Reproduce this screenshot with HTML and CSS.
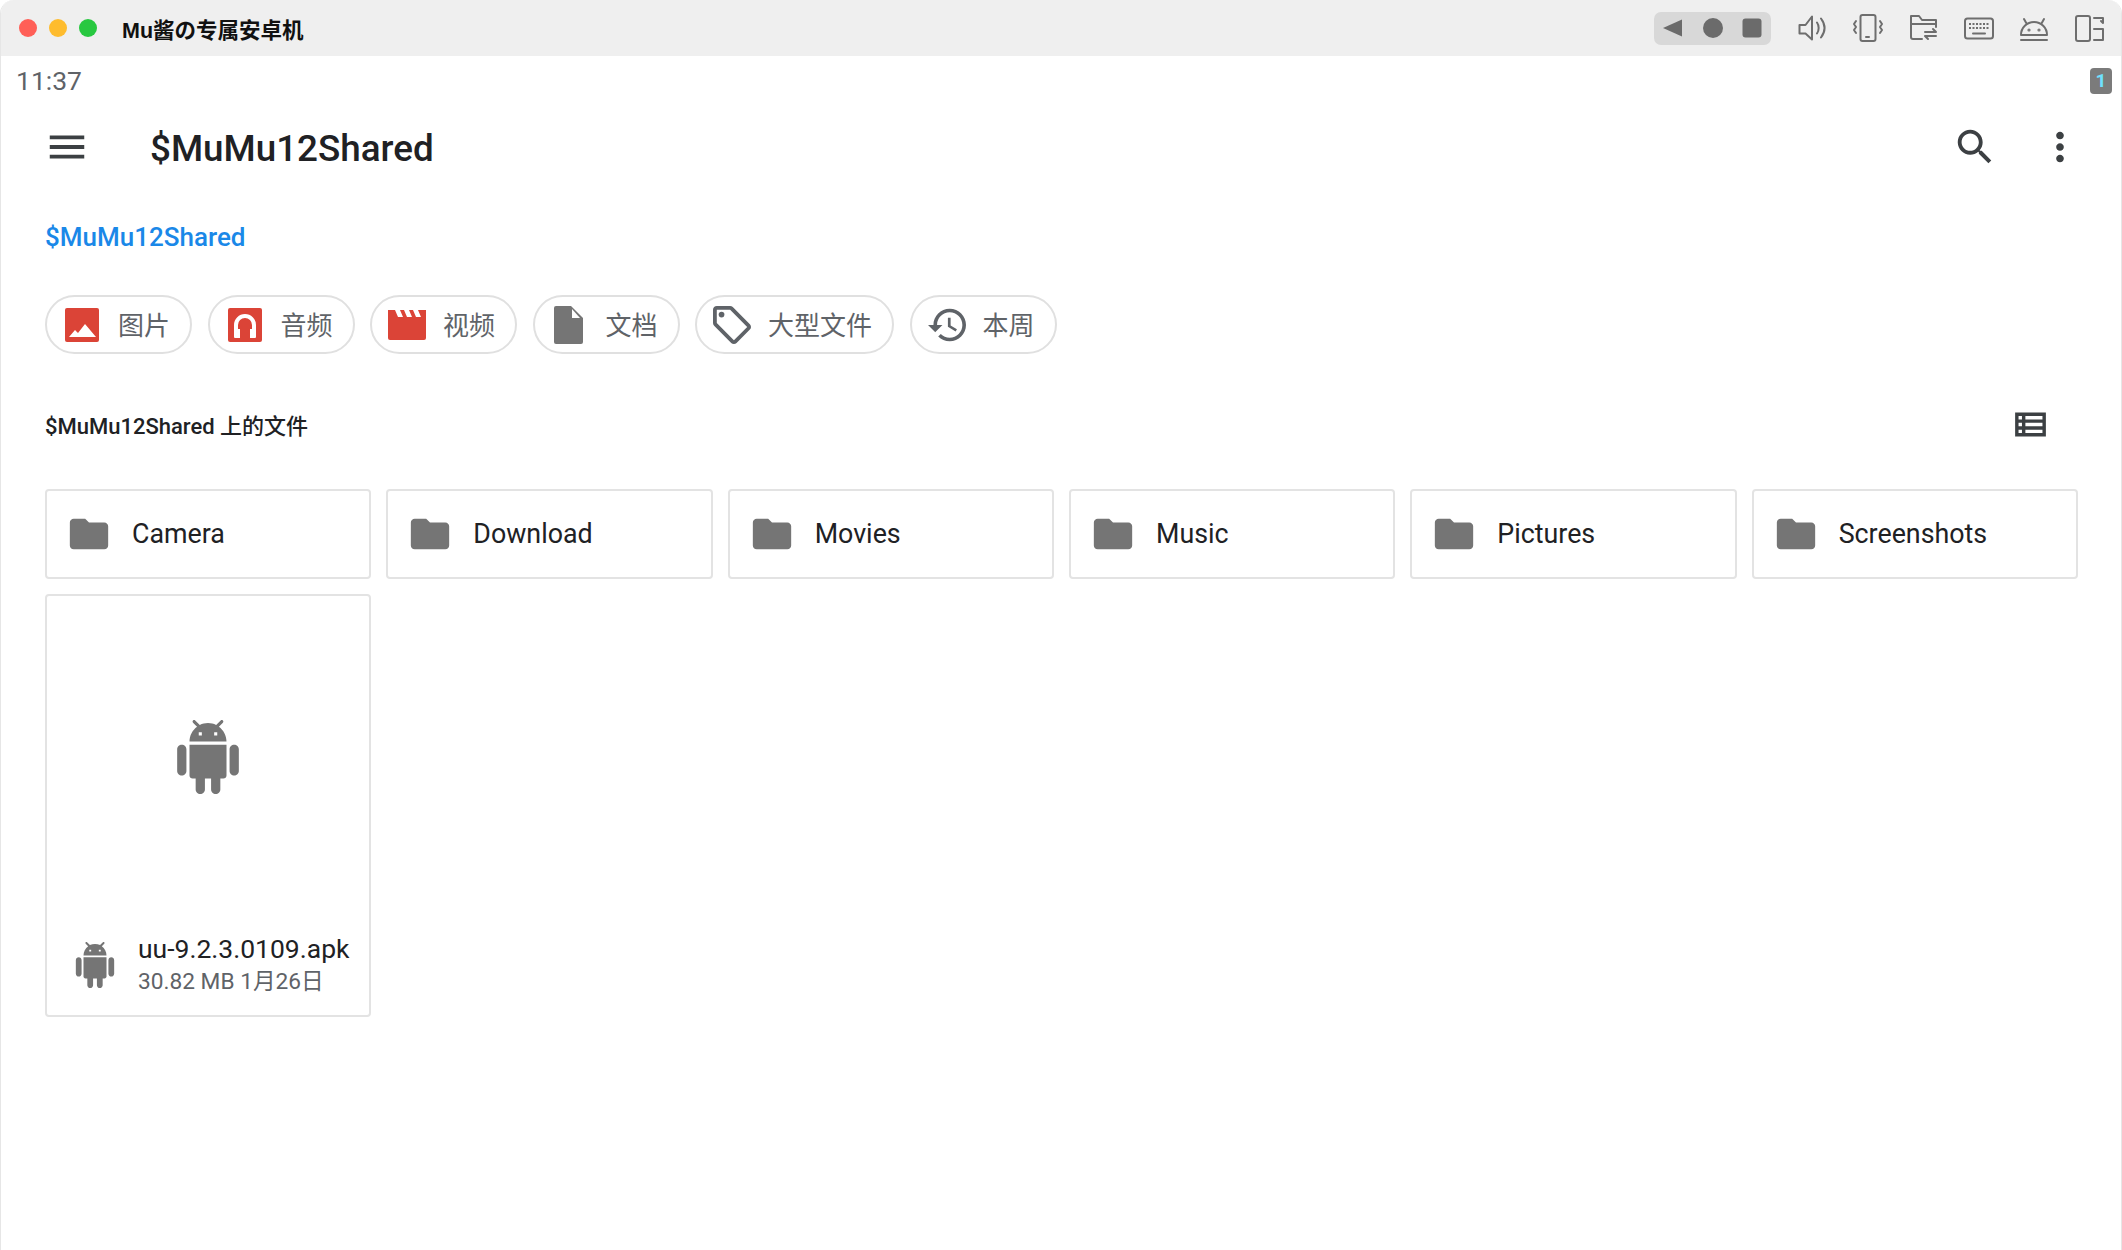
FILE: index.html
```html
<!DOCTYPE html>
<html lang="zh-CN">
<head>
    <meta charset="UTF-8">
    <meta name="viewport" content="width=device-width, initial-scale=1.0">
    <title>Mu酱の专属安卓机</title>
    <link rel="stylesheet" href="styles.css">
</head>
<body>
    <div class="window">
        <!-- emulator title bar -->
        <header class="titlebar">
            <div class="traffic">
                <span class="light red"></span>
                <span class="light yellow"></span>
                <span class="light green"></span>
            </div>
            <div class="window-title">Mu酱の专属安卓机</div>
            <div class="nav-pill">
                <svg class="nav-icon" viewBox="0 0 20 20"><path d="M0 10 19 1.500V18.500z"/></svg>
                <svg class="nav-icon" viewBox="0 0 20 20"><circle cx="10" cy="10" r="10"/></svg>
                <svg class="nav-icon" viewBox="0 0 20 20"><rect width="19" height="19" x="0.500" y="0.500" rx="3"/></svg>
            </div>
            <div class="tools">
                <svg class="tool" viewBox="0 0 32 32"><path d="M3.500 13h6L16 4.500v23l-6.500-6h-6z"/><path d="M21 10.500c2.200 3 2.200 8 0 11M25 6.500c4.500 6 4.500 13 0 19"/></svg>
                <svg class="tool" viewBox="0 0 32 32"><rect x="8.500" y="3" width="15" height="26" rx="2"/><path d="M14 25h3M4 9l-2 3 2 3-2 3 2 3M28 9l2 3-2 3 2 3-2 3"/></svg>
                <svg class="tool" viewBox="0 0 32 32"><path d="M15 27H6a2 2 0 0 1-2-2V4h8l3 4h14v7M4 12h25M18 20h11l-3-3M29 24H18l3 3"/></svg>
                <svg class="tool" viewBox="0 0 32 32"><rect x="2" y="6.500" width="28" height="20" rx="2.500"/><path class="keys" d="M6 12h20M6 16h20"/><path d="M10 21.500h12"/></svg>
                <svg class="tool" viewBox="0 0 32 32"><path d="M3 23a13 13 0 0 1 26 0zM8.500 11.500 6 7M23.500 11.500 26 7M3 28h26"/><circle cx="11" cy="18" r="0.600"/><circle cx="21" cy="18" r="0.600"/></svg>
                <svg class="tool" viewBox="0 0 32 32"><rect x="2" y="4" width="14" height="25" rx="2"/><path d="M20 6h9v5l-2-2M20 17h9v11h-9"/></svg>
            </div>
        </header>

        <div class="statusbar">
            <span class="clock">11:37</span>
            <span class="badge">1</span>
        </div>

        <div class="toolbar">
            <svg class="tb-icon" viewBox="0 0 24 24"><path d="M3 18h18v-2H3v2zm0-5h18v-2H3v2zm0-7v2h18V6H3z"/></svg>
            <h1 class="page-title">$MuMu12Shared</h1>
            <svg class="tb-icon search" viewBox="0 0 24 24"><path d="M15.500 14h-.79l-.28-.27C15.410 12.590 16 11.110 16 9.500 16 5.910 13.090 3 9.500 3S3 5.910 3 9.500 5.910 16 9.500 16c1.610 0 3.090-.59 4.230-1.570l.27.28v.79l5 4.990L20.490 19l-4.990-5zm-6 0C7.010 14 5 11.990 5 9.500S7.010 5 9.500 5 14 7.010 14 9.500 11.990 14 9.500 14z"/></svg>
            <svg class="tb-icon" viewBox="0 0 24 24"><path d="M12 8c1.100 0 2-.9 2-2s-.9-2-2-2-2 .9-2 2 .9 2 2 2zm0 2c-1.100 0-2 .9-2 2s.9 2 2 2 2-.9 2-2-.9-2-2-2zm0 6c-1.100 0-2 .9-2 2s.9 2 2 2 2-.9 2-2-.9-2-2-2z"/></svg>
        </div>

        <main class="content">
            <div class="crumb">$MuMu12Shared</div>

            <div class="chips">
                <div class="chip">
                    <svg class="chip-icon" viewBox="0 0 38 38"><rect x="2" y="2" width="34" height="34" rx="2" fill="#db4437"/><path d="M6 31l6-7 3 3 7-9 11 13z" fill="#fff"/></svg>
                    <span class="chip-label">图片</span>
                </div>
                <div class="chip">
                    <svg class="chip-icon" viewBox="0 0 38 38"><rect x="2" y="2" width="34" height="34" rx="2" fill="#db4437"/><path d="M10 24v-5a9 9 0 0 1 18 0v5" fill="none" stroke="#fff" stroke-width="4"/><path d="M8 23h6v9H9a1 1 0 0 1-1-1zM24 23h6v8a1 1 0 0 1-1 1h-5z" fill="#fff"/></svg>
                    <span class="chip-label">音频</span>
                </div>
                <div class="chip">
                    <svg class="chip-icon" viewBox="0 0 38 38"><path d="M0 4h38v28a2 2 0 0 1-2 2H2a2 2 0 0 1-2-2z" fill="#db4437"/><path d="M7 4h5l3 7h-5zM16 4h5l3 7h-5zM25 4h5l3 7h-5z" fill="#fff"/></svg>
                    <span class="chip-label">视频</span>
                </div>
                <div class="chip">
                    <svg class="chip-icon" viewBox="0 0 38 38"><path d="M5 0h15l12 12v24a2 2 0 0 1-2 2H5a2 2 0 0 1-2-2V2a2 2 0 0 1 2-2z" fill="#757575"/><path d="M21 3l8 9h-8z" fill="#fff"/></svg>
                    <span class="chip-label">文档</span>
                </div>
                <div class="chip">
                    <svg class="chip-icon" viewBox="2 2 20 20"><path fill="#5f6368" d="M21.410 11.580l-9-9C12.050 2.220 11.550 2 11 2H4c-1.100 0-2 .9-2 2v7c0 .55.22 1.050.59 1.420l9 9c.36.36.86.58 1.410.58s1.050-.22 1.410-.59l7-7c.37-.36.59-.86.59-1.410s-.23-1.060-.59-1.420zM13 20.010L4 11V4h7v-.01l9 9-7 7.020z"/><circle cx="6.500" cy="6.500" r="1.500" fill="#5f6368"/></svg>
                    <span class="chip-label">大型文件</span>
                </div>
                <div class="chip">
                    <svg class="chip-icon" viewBox="1 2 21 20"><path fill="#5f6368" d="M13 3c-4.970 0-9 4.030-9 9H1l3.890 3.890.07.14L9 12H6c0-3.870 3.130-7 7-7s7 3.130 7 7-3.130 7-7 7c-1.930 0-3.680-.79-4.940-2.060l-1.420 1.420C8.270 19.990 10.510 21 13 21c4.970 0 9-4.030 9-9s-4.030-9-9-9zm-1 5v5l4.280 2.540.72-1.210-3.500-2.080V8H12z"/></svg>
                    <span class="chip-label">本周</span>
                </div>
            </div>

            <div class="section-head">
                <span class="section-title">$MuMu12Shared 上的文件</span>
                <svg class="view-icon" viewBox="0 0 24 24"><path d="M3 5v14h18V5H3zm4 12H5v-2h2v2zm0-4H5v-2h2v2zm0-4H5V7h2v2zm12 8H9v-2h10v2zm0-4H9v-2h10v2zm0-4H9V7h10v2z"/></svg>
            </div>

            <div class="grid">
                <div class="folder"><svg class="folder-icon" viewBox="0 0 24 24"><path d="M10 4H4c-1.100 0-1.990.9-1.990 2L2 18c0 1.100.9 2 2 2h16c1.100 0 2-.9 2-2V8c0-1.100-.9-2-2-2h-8l-2-2z"/></svg><span>Camera</span></div>
                <div class="folder"><svg class="folder-icon" viewBox="0 0 24 24"><path d="M10 4H4c-1.100 0-1.990.9-1.990 2L2 18c0 1.100.9 2 2 2h16c1.100 0 2-.9 2-2V8c0-1.100-.9-2-2-2h-8l-2-2z"/></svg><span>Download</span></div>
                <div class="folder"><svg class="folder-icon" viewBox="0 0 24 24"><path d="M10 4H4c-1.100 0-1.990.9-1.990 2L2 18c0 1.100.9 2 2 2h16c1.100 0 2-.9 2-2V8c0-1.100-.9-2-2-2h-8l-2-2z"/></svg><span>Movies</span></div>
                <div class="folder"><svg class="folder-icon" viewBox="0 0 24 24"><path d="M10 4H4c-1.100 0-1.990.9-1.990 2L2 18c0 1.100.9 2 2 2h16c1.100 0 2-.9 2-2V8c0-1.100-.9-2-2-2h-8l-2-2z"/></svg><span>Music</span></div>
                <div class="folder"><svg class="folder-icon" viewBox="0 0 24 24"><path d="M10 4H4c-1.100 0-1.990.9-1.990 2L2 18c0 1.100.9 2 2 2h16c1.100 0 2-.9 2-2V8c0-1.100-.9-2-2-2h-8l-2-2z"/></svg><span>Pictures</span></div>
                <div class="folder"><svg class="folder-icon" viewBox="0 0 24 24"><path d="M10 4H4c-1.100 0-1.990.9-1.990 2L2 18c0 1.100.9 2 2 2h16c1.100 0 2-.9 2-2V8c0-1.100-.9-2-2-2h-8l-2-2z"/></svg><span>Screenshots</span></div>

                <div class="file">
                    <div class="thumb">
                        <svg class="android big" viewBox="0 0 24 24"><path d="M6 18c0 .55.45 1 1 1h1v3.500c0 .83.67 1.500 1.500 1.500s1.500-.67 1.500-1.500V19h2v3.500c0 .83.67 1.500 1.500 1.500s1.500-.67 1.500-1.500V19h1c.55 0 1-.45 1-1V8H6v10zM3.500 8C2.670 8 2 8.670 2 9.500v7c0 .83.67 1.500 1.500 1.500S5 17.330 5 16.500v-7C5 8.670 4.330 8 3.500 8zm17 0c-.83 0-1.500.67-1.500 1.500v7c0 .83.67 1.500 1.500 1.500s1.500-.67 1.500-1.500v-7c0-.83-.67-1.500-1.500-1.500zm-4.970-5.840l1.300-1.300c.2-.2.2-.51 0-.71-.2-.2-.51-.2-.71 0l-1.480 1.480C13.850 1.230 12.950 1 12 1c-.96 0-1.860.23-2.660.63L7.850.15c-.2-.2-.51-.2-.71 0-.2.2-.2.51 0 .71l1.310 1.310C6.970 3.260 6 5.010 6 7h12c0-1.990-.97-3.750-2.470-4.840zM10 5H9V4h1v1zm5 0h-1V4h1v1z"/></svg>
                    </div>
                    <div class="file-info">
                        <svg class="android small" viewBox="0 0 24 24"><path d="M6 18c0 .55.45 1 1 1h1v3.500c0 .83.67 1.500 1.500 1.500s1.500-.67 1.500-1.500V19h2v3.500c0 .83.67 1.500 1.500 1.500s1.500-.67 1.500-1.500V19h1c.55 0 1-.45 1-1V8H6v10zM3.500 8C2.670 8 2 8.670 2 9.500v7c0 .83.67 1.500 1.500 1.500S5 17.330 5 16.500v-7C5 8.670 4.330 8 3.500 8zm17 0c-.83 0-1.500.67-1.500 1.500v7c0 .83.67 1.500 1.500 1.500s1.500-.67 1.500-1.500v-7c0-.83-.67-1.500-1.500-1.500zm-4.970-5.840l1.300-1.300c.2-.2.2-.51 0-.71-.2-.2-.51-.2-.71 0l-1.480 1.480C13.850 1.230 12.950 1 12 1c-.96 0-1.860.23-2.660.63L7.850.15c-.2-.2-.51-.2-.71 0-.2.2-.2.51 0 .71l1.310 1.310C6.970 3.260 6 5.010 6 7h12c0-1.990-.97-3.750-2.470-4.840zM10 5H9V4h1v1zm5 0h-1V4h1v1z"/></svg>
                        <div class="file-text">
                            <div class="file-name">uu-9.2.3.0109.apk</div>
                            <div class="file-meta">30.82 MB 1月26日</div>
                        </div>
                    </div>
                </div>
            </div>
        </main>
    </div>
</body>
</html>
```

FILE: styles.css
```css
* {
  box-sizing: border-box;
}

html, body {
  margin: 0;
  height: 100%;
  background-color: #fff;
}

body {
  font-family: Roboto, "Noto Sans CJK SC", sans-serif;
  color: #202124;
  overflow: hidden;
}

.window {
  height: 1250px;
  border-left: 1px solid #e6e6e6;
  border-right: 1px solid #e6e6e6;
  border-radius: 14px 14px 0 0;
  overflow: hidden;
}

/* title bar */

.titlebar {
  height: 56px;
  background-color: #efefef;
  display: flex;
  align-items: center;
  padding: 0 15px 0 18px;
}

.traffic {
  display: flex;
  gap: 12px;
  margin-right: 25px;
}

.light {
  width: 18px;
  height: 18px;
  border-radius: 50%;
}

.light.red { background-color: #ff5f57; }
.light.yellow { background-color: #febc2e; }
.light.green { background-color: #28c840; }

.window-title {
  font-family: "Liberation Sans", "Noto Sans CJK SC", sans-serif;
  font-size: 21.500px;
  font-weight: 700;
  color: #111;
}

.nav-pill {
  margin-left: auto;
  width: 117px;
  height: 33px;
  background-color: #d8d8d8;
  border-radius: 7px;
  display: flex;
  align-items: center;
  justify-content: space-between;
  padding: 0 9px;
}

.nav-icon {
  width: 20px;
  height: 20px;
  fill: #6b6b6b;
}

.tools {
  display: flex;
  gap: 23.600px;
  margin-left: 25px;
}

.tool {
  width: 32px;
  height: 32px;
  fill: none;
  stroke: #6e6e6e;
  stroke-width: 2;
  stroke-linejoin: round;
  stroke-linecap: round;
}

.tool .keys {
  stroke-linecap: butt;
  stroke-dasharray: 2 1.500;
}

/* android status bar */

.statusbar {
  height: 46px;
  padding: 3px 9px 0 15px;
  display: flex;
  align-items: center;
  justify-content: space-between;
}

.clock {
  font-size: 26.500px;
  color: #5f6368;
}

.badge {
  width: 22px;
  height: 26px;
  border-radius: 4px;
  background-color: #7b7b7b;
  color: #6fe0ff;
  font-size: 19px;
  font-weight: 700;
  text-align: center;
  line-height: 26px;
}

/* app toolbar */

.toolbar {
  height: 90px;
  display: flex;
  align-items: center;
  padding: 0 38px 0 43px;
}

.tb-icon {
  width: 46px;
  height: 46px;
  fill: #3c4043;
  flex: none;
}

.page-title {
  margin: 0 0 0 60px;
  padding-top: 2px;
  font-size: 36.800px;
  font-weight: 500;
  color: #202124;
}

.search {
  margin-left: auto;
  margin-right: 39px;
}

/* content */

.content {
  padding: 0 43px 0 44px;
}

.crumb {
  height: 36px;
  margin-top: 27px;
  font-size: 26px;
  font-weight: 500;
  line-height: 36px;
  color: #1a88e8;
}

.chips {
  display: flex;
  gap: 15.500px;
  margin-top: 40px;
}

.chip {
  height: 59px;
  display: flex;
  align-items: center;
  gap: 17px;
  padding: 0 20px 0 16px;
  border: 2px solid #e0e0e0;
  border-radius: 30px;
  font-size: 26px;
  color: #5f6368;
}

.chip-icon {
  width: 38px;
  height: 38px;
  flex: none;
}

.chip-label {
  padding-bottom: 3px;
}

.section-head {
  height: 46px;
  margin-top: 47px;
  display: flex;
  align-items: center;
  justify-content: space-between;
  padding-right: 27px;
}

.section-title {
  font-size: 22px;
  font-weight: 500;
  color: #202124;
}

.view-icon {
  width: 41px;
  height: 41px;
  fill: #3c4043;
}

.grid {
  display: grid;
  grid-template-columns: repeat(6, 1fr);
  gap: 15px 15px;
  margin-top: 42px;
}

.folder,
.file {
  border: 2px solid #e3e3e3;
  border-radius: 4px;
}

.folder {
  height: 90px;
  display: flex;
  align-items: center;
  gap: 20px;
  padding-left: 19px;
  font-size: 26.800px;
  color: #202124;
}

.folder-icon {
  width: 46px;
  height: 46px;
  fill: #757575;
  flex: none;
}

.file {
  height: 423px;
  display: flex;
  flex-direction: column;
}

.thumb {
  flex: 1;
  display: flex;
  align-items: center;
  justify-content: center;
}

.android {
  fill: #757575;
  flex: none;
}

.android.big {
  width: 74px;
  height: 74px;
}

.android.small {
  width: 46px;
  height: 46px;
}

.file-info {
  height: 98px;
  padding-bottom: 3px;
  display: flex;
  align-items: center;
  gap: 20px;
  padding-left: 25px;
}

.file-name {
  font-size: 26.500px;
  line-height: 34px;
  color: #202124;
}

.file-meta {
  font-size: 22.700px;
  line-height: 32px;
  color: #5f6368;
}
```
